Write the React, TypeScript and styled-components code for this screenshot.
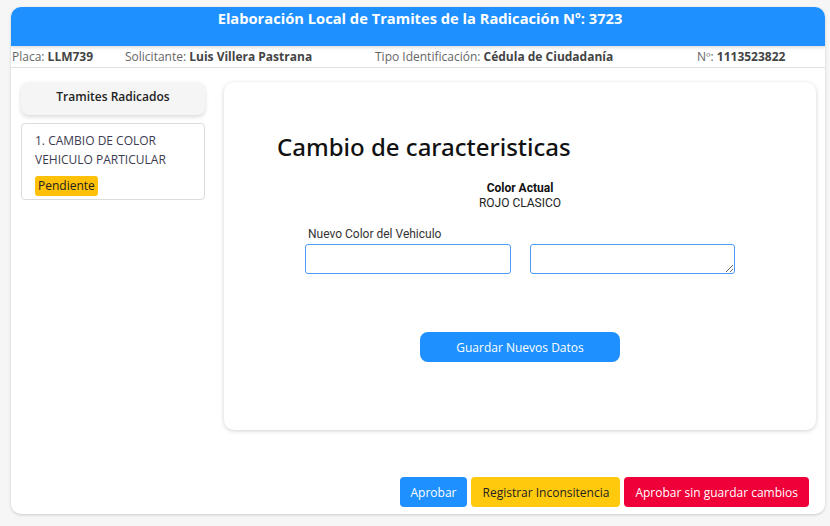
import React from "react";
import styled, { createGlobalStyle } from "styled-components";

const Global = createGlobalStyle`
  html, body { margin: 0; padding: 0; background: #f6f6f6; }
  body { font-family: "Open Sans", "Noto Sans", sans-serif; }
  * { box-sizing: border-box; }
`;

const Page = styled.div`
  width: 830px;
  height: 526px;
  padding: 7px 5px 0 11px;
`;

const Card = styled.div`
  width: 814px;
  height: 507px;
  background: #fff;
  border-radius: 10px;
  box-shadow: 0 1px 3px rgba(0, 0, 0, 0.18);
  display: flex;
  flex-direction: column;
  overflow: hidden;
`;

const Header = styled.div`
  height: 39px;
  background: #1e90ff;
  color: #fff;
  font-weight: 700;
  font-size: 14.7px;
  text-align: center;
  padding: 1px 0 0 4px;
  line-height: 20px;
  box-shadow: 0 2px 3px rgba(0, 0, 0, 0.12);
  position: relative;
  z-index: 1;
`;

const InfoRow = styled.div`
  height: 22px;
  display: grid;
  grid-template-columns: 113px 250px 322px 1fr;
  align-items: center;
  padding-left: 1px;
  border-bottom: 1px solid #dee2e6;
  font-size: 12px;
  color: #666;
`;

const InfoItem = styled.div`
  white-space: nowrap;
  b { color: #444; font-weight: 700; }
`;

const Body = styled.div`
  flex: 1;
  display: flex;
  gap: 19px;
  padding: 14px 9px 0 10px;
`;

const Sidebar = styled.div`
  width: 184px;
  display: flex;
  flex-direction: column;
  gap: 8px;
`;

const SideTitle = styled.div`
  height: 33px;
  background: #f5f5f5;
  border-radius: 8px;
  box-shadow: 0 2px 4px rgba(0, 0, 0, 0.15);
  display: flex;
  align-items: center;
  justify-content: center;
  padding-bottom: 4px;
  font-size: 12px;
  font-weight: 600;
  color: #222;
`;

const SideItem = styled.div`
  border: 1px solid #dcdcdc;
  border-radius: 4px;
  padding: 7px 12px 4px 13px;
  height: 77px;
  font-size: 12px;
  line-height: 19px;
  color: #3c3c50;
`;

const Badge = styled.span`
  display: inline-block;
  background: #ffc107;
  color: #222;
  border-radius: 3px;
  padding: 1px 3px;
  line-height: 18px;
  margin-top: 7px;
`;

const Main = styled.div`
  width: 592px;
  height: 348px;
  border-radius: 10px;
  box-shadow: 0 1px 4px rgba(0, 0, 0, 0.18);
  padding: 48px 0 0 53px;
  display: flex;
  flex-direction: column;
`;

const Title = styled.h2`
  margin: 0;
  font-family: "Noto Sans", sans-serif;
  font-weight: 500;
  font-size: 24px;
  color: #111;
  line-height: 34px;
`;

const Current = styled.div`
  margin: 17px 0 0 -53px;
  text-align: center;
  font-family: Roboto, sans-serif;
  font-size: 12px;
  line-height: 15px;
  color: #222;
  b { font-weight: 700; display: block; color: #111; }
`;

const Label = styled.div`
  margin: 16px 0 0 31px;
  font-family: Roboto, sans-serif;
  font-size: 12px;
  color: #333;
  line-height: 15px;
`;

const Fields = styled.div`
  display: flex;
  gap: 19px;
  margin: 2px 0 0 28px;
`;

const Input = styled.input`
  width: 206px;
  height: 30px;
  border: 1px solid #4a9cf5;
  border-radius: 3px;
  outline: none;
`;

const Area = styled.textarea`
  width: 205px;
  height: 30px;
  border: 1px solid #4a9cf5;
  border-radius: 3px;
  outline: none;
  resize: vertical;
`;

const SaveButton = styled.button`
  margin: 58px 0 0 143px;
  width: 200px;
  height: 30px;
  border: none;
  border-radius: 8px;
  background: #1e90ff;
  color: #fff;
  font-family: "Open Sans", sans-serif;
  font-size: 12px;
`;

const Footer = styled.div`
  height: 30px;
  display: flex;
  justify-content: flex-end;
  gap: 4px;
  padding: 0 16px 0 0;
  margin-bottom: 7px;
`;

const ActionButton = styled.button<{ $bg: string; $fg: string }>`
  height: 30px;
  padding: 0 11px;
  border: none;
  border-radius: 4px;
  background: ${(p) => p.$bg};
  color: ${(p) => p.$fg};
  font-family: "Open Sans", sans-serif;
  font-size: 12px;
`;

export default function App() {
  return (
    <Page>
      <Global />
      <Card>
        <Header>Elaboración Local de Tramites de la Radicación Nº: 3723</Header>
        <InfoRow>
          <InfoItem>Placa: <b>LLM739</b></InfoItem>
          <InfoItem>Solicitante: <b>Luis Villera Pastrana</b></InfoItem>
          <InfoItem>Tipo Identificación: <b>Cédula de Ciudadanía</b></InfoItem>
          <InfoItem>Nº: <b>1113523822</b></InfoItem>
        </InfoRow>
        <Body>
          <Sidebar>
            <SideTitle>Tramites Radicados</SideTitle>
            <SideItem>
              1. CAMBIO DE COLOR VEHICULO PARTICULAR
              <br />
              <Badge>Pendiente</Badge>
            </SideItem>
          </Sidebar>
          <Main>
            <Title>Cambio de caracteristicas</Title>
            <Current>
              <b>Color Actual</b>
              ROJO CLASICO
            </Current>
            <Label>Nuevo Color del Vehiculo</Label>
            <Fields>
              <Input />
              <Area />
            </Fields>
            <SaveButton>Guardar Nuevos Datos</SaveButton>
          </Main>
        </Body>
        <Footer>
          <ActionButton $bg="#1e90ff" $fg="#fff">Aprobar</ActionButton>
          <ActionButton $bg="#ffc90e" $fg="#222">Registrar Inconsitencia</ActionButton>
          <ActionButton $bg="#ef0038" $fg="#fff">Aprobar sin guardar cambios</ActionButton>
        </Footer>
      </Card>
    </Page>
  );
}
